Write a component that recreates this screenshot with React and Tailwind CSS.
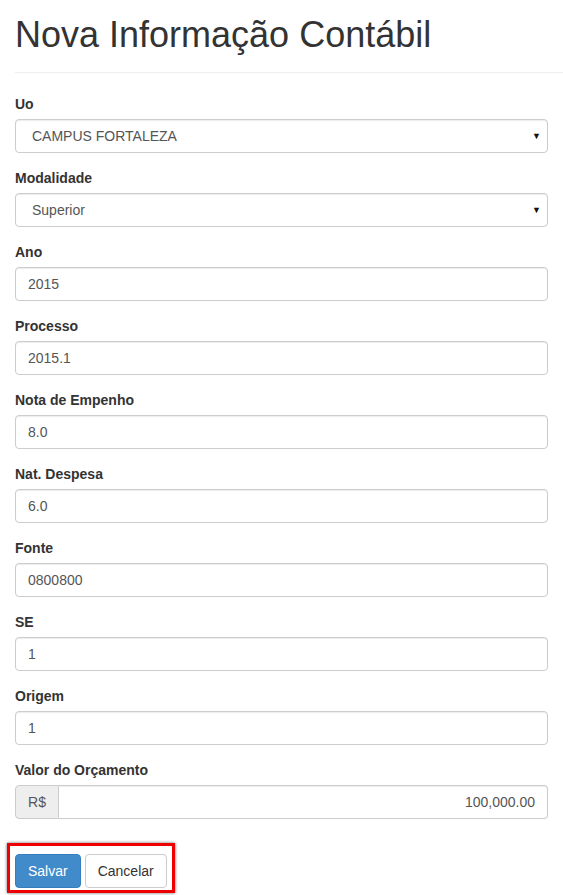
const fields = [
  { label: 'Uo', value: 'CAMPUS FORTALEZA', select: true },
  { label: 'Modalidade', value: 'Superior', select: true },
  { label: 'Ano', value: '2015' },
  { label: 'Processo', value: '2015.1' },
  { label: 'Nota de Empenho', value: '8.0' },
  { label: 'Nat. Despesa', value: '6.0' },
  { label: 'Fonte', value: '0800800' },
  { label: 'SE', value: '1' },
  { label: 'Origem', value: '1' },
];

function Field({ label, value, select }) {
  return (
    <div className="mb-[15px]">
      <div className="mb-[5px] text-[14px] leading-[20px] font-bold text-[#333]">{label}</div>
      {select ? (
        <div className="h-[34px] flex items-center justify-between border border-[#ccc] rounded-[4px] pl-[16px] pr-[6px] text-[#555] shadow-[inset_0_1px_1px_rgba(0,0,0,0.075)]">
          <span>{value}</span>
          <span className="text-[9px] text-[#111]">▼</span>
        </div>
      ) : (
        <div className="h-[34px] flex items-center border border-[#ccc] rounded-[4px] px-[12px] text-[#555] shadow-[inset_0_1px_1px_rgba(0,0,0,0.075)]">
          {value}
        </div>
      )}
    </div>
  );
}

export default function App() {
  return (
    <div className="min-h-[895px] bg-white pl-[15px] font-['Liberation_Sans',Arial,sans-serif] text-[14px] leading-[20px] text-[#333]">
      <div className="pt-[15px] pb-[17px] border-b border-[#eee]">
        <h1 className="text-[36px] leading-[1.1] font-normal text-[#333]">Nova Informação Contábil</h1>
      </div>

      <form className="pr-[15px] pt-[21px]">
        {fields.map((f) => (
          <Field key={f.label} {...f} />
        ))}

        <div className="mb-[15px]">
          <div className="mb-[5px] font-bold">Valor do Orçamento</div>
          <div className="flex h-[34px]">
            <div className="w-[44px] flex items-center justify-center bg-[#eee] border border-[#ccc] rounded-l-[4px] text-[#555]">
              R$
            </div>
            <div className="flex-1 flex items-center justify-end border border-l-0 border-[#ccc] rounded-r-[4px] px-[12px] text-[#555] shadow-[inset_0_1px_1px_rgba(0,0,0,0.075)]">
              100,000.00
            </div>
          </div>
        </div>

        <div className="relative mt-[35px] flex gap-[4px]">
          <button
            type="button"
            className="h-[34px] px-[12px] rounded-[4px] bg-[#428bca] border border-[#357ebd] text-white"
          >
            Salvar
          </button>
          <button
            type="button"
            className="h-[34px] px-[12px] rounded-[4px] bg-white border border-[#ccc] text-[#333]"
          >
            Cancelar
          </button>
          <div className="absolute left-[-8px] top-[-11px] w-[168px] h-[50px] border-[3px] border-[#e00] shadow-[0_0_3px_rgba(0,0,0,0.6)] pointer-events-none"></div>
        </div>
      </form>
    </div>
  );
}
